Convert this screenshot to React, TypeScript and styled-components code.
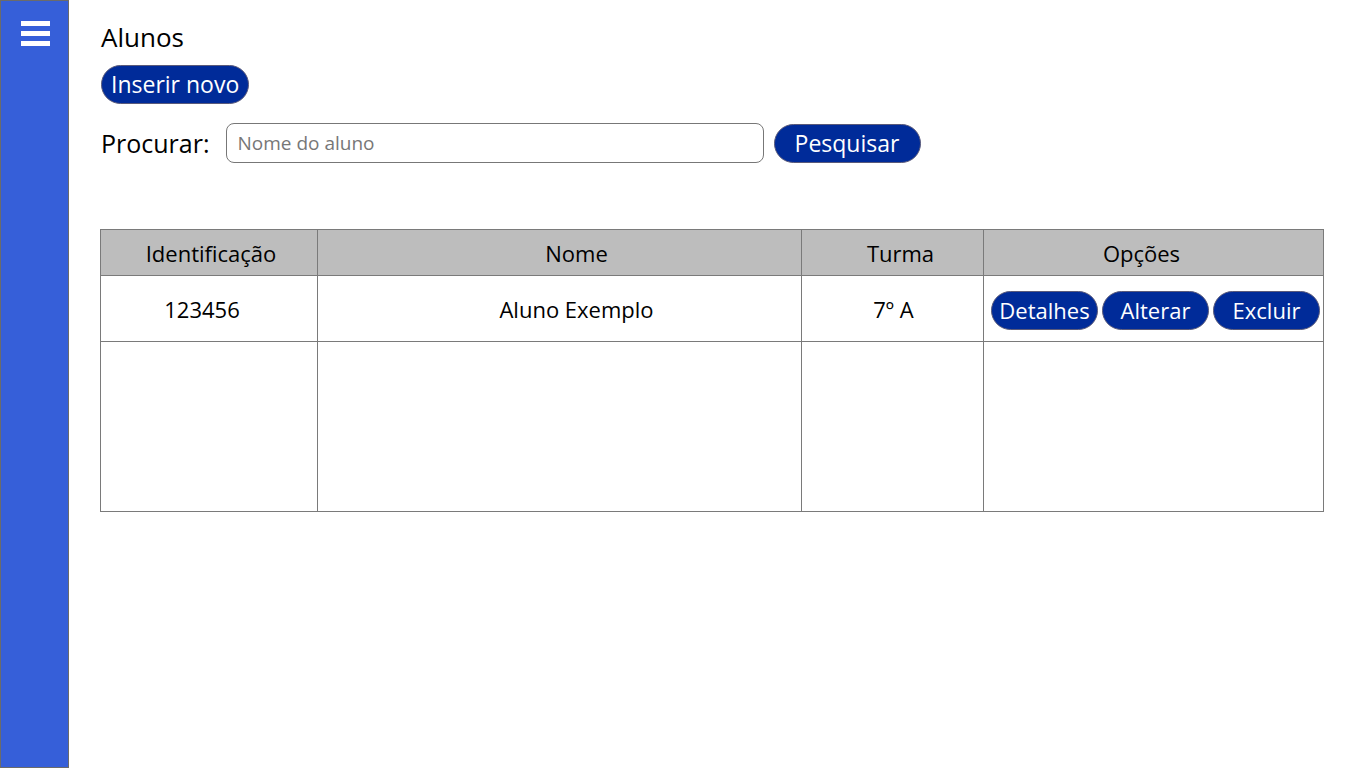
import React from "react";
import styled, { createGlobalStyle } from "styled-components";

const Global = createGlobalStyle`
  html, body { margin: 0; padding: 0; background: #fff; }
  body { font-family: "Segoe UI", "Open Sans", sans-serif; color: #000; }
  * { box-sizing: border-box; }
`;

const Layout = styled.div`
  display: flex;
  width: 1366px;
  height: 768px;
  overflow: hidden;
`;

const Sidebar = styled.nav`
  width: 69px;
  flex: none;
  height: 768px;
  background: #365fd9;
  border: 1px solid #6b6b6b;
  display: flex;
  justify-content: center;
  padding-top: 20px;
  padding-left: 2px;
`;

const Burger = styled.div`
  display: flex;
  flex-direction: column;
  gap: 5px;
`;

const Bar = styled.span`
  display: block;
  width: 29px;
  height: 5px;
  background: #fff;
`;

const Main = styled.main`
  flex: 1;
  padding: 18px 0 0 32px;
  display: flex;
  flex-direction: column;
`;

const Title = styled.h1`
  margin: 0;
  font-size: 26px;
  font-weight: 400;
  line-height: 38px;
`;

const PillButton = styled.button<{ $size?: number; $w?: number }>`
  height: 39px;
  padding: 0 ${(p) => (p.$w ? 0 : 9)}px;
  width: ${(p) => (p.$w ? `${p.$w}px` : "auto")};
  border-radius: 20px;
  background: #002b99;
  color: #fff;
  border: 1px solid #5a5a7a;
  font-family: inherit;
  font-size: ${(p) => p.$size ?? 22}px;
  line-height: 1;
  display: inline-flex;
  align-items: center;
  justify-content: center;
  white-space: nowrap;
`;

const InsertRow = styled.div`
  margin-top: 9px;
  display: flex;
`;

const SearchRow = styled.div`
  margin-top: 19px;
  display: flex;
  align-items: center;
  gap: 10px;
`;

const SearchLabel = styled.label`
  font-size: 25px;
  margin-right: 6px;
`;

const SearchInput = styled.input`
  width: 538px;
  height: 40px;
  border: 1px solid #777;
  border-radius: 8px;
  padding: 0 11px;
  font-family: inherit;
  font-size: 19px;
  color: #333;
  &::placeholder { color: #777; }
`;

const Table = styled.table`
  margin-top: 66px;
  width: 1224px;
  margin-left: -1px;
  border-collapse: collapse;
  font-size: 22px;
`;

const Th = styled.th<{ $w: number; $shift?: number }>`
  width: ${(p) => p.$w}px;
  height: 46px;
  background: #bdbdbd;
  border: 1px solid #7a7a7a;
  font-weight: 400;
  text-align: center;
  padding: 0;
  padding-left: ${(p) => Math.max(0, (p.$shift ?? 0) * 2)}px;
  padding-right: ${(p) => Math.max(0, -(p.$shift ?? 0) * 2)}px;
`;

const Td = styled.td<{ $h: number; $shift?: number }>`
  height: ${(p) => p.$h}px;
  border: 1px solid #7a7a7a;
  text-align: center;
  padding: 0;
  padding-left: ${(p) => Math.max(0, (p.$shift ?? 0) * 2)}px;
  padding-right: ${(p) => Math.max(0, -(p.$shift ?? 0) * 2)}px;
`;

const Options = styled.div`
  display: flex;
  justify-content: center;
  gap: 4px;
  padding-left: 4px;
  padding-top: 3px;
`;

export default function App() {
  return (
    <>
      <Global />
      <Layout>
        <Sidebar>
          <Burger>
            <Bar />
            <Bar />
            <Bar />
          </Burger>
        </Sidebar>
        <Main>
          <Title>Alunos</Title>
          <InsertRow>
            <PillButton $size={23}>Inserir novo</PillButton>
          </InsertRow>
          <SearchRow>
            <SearchLabel>Procurar:</SearchLabel>
            <SearchInput placeholder="Nome do aluno" />
            <PillButton $w={147} $size={23}>Pesquisar</PillButton>
          </SearchRow>
          <Table>
            <thead>
              <tr>
                <Th $w={217} $shift={2}>Identificação</Th>
                <Th $w={484} $shift={17}>Nome</Th>
                <Th $w={182} $shift={8}>Turma</Th>
                <Th $w={340} $shift={-12}>Opções</Th>
              </tr>
            </thead>
            <tbody>
              <tr>
                <Td $h={66} $shift={-7}>123456</Td>
                <Td $h={66} $shift={17}>Aluno Exemplo</Td>
                <Td $h={66} $shift={1}>7º A</Td>
                <Td $h={66}>
                  <Options>
                    <PillButton $w={107}>Detalhes</PillButton>
                    <PillButton $w={107}>Alterar</PillButton>
                    <PillButton $w={107}>Excluir</PillButton>
                  </Options>
                </Td>
              </tr>
              <tr>
                <Td $h={170} />
                <Td $h={170} />
                <Td $h={170} />
                <Td $h={170} />
              </tr>
            </tbody>
          </Table>
        </Main>
      </Layout>
    </>
  );
}
